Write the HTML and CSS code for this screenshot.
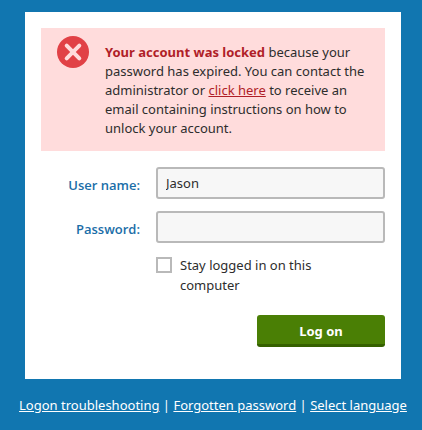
FILE: index.html
```html
<!DOCTYPE html>
<html lang="en">
<head>
<meta charset="utf-8">
<meta name="viewport" content="width=device-width, initial-scale=1">
<title>Log on</title>
<link rel="stylesheet" href="styles.css">
</head>
<body>
<main class="card">
  <div class="alert" role="alert">
    <svg class="alert-icon" viewBox="0 0 32 32" aria-hidden="true">
      <circle cx="16" cy="16" r="16" fill="#e14146"/>
      <path d="M9.7 9.7L22.3 22.3M22.3 9.7L9.7 22.3" stroke="#ffdcdc" stroke-width="4" stroke-linecap="round"/>
    </svg>
    <p class="alert-text"><strong>Your account was locked</strong> because your password has expired. You can contact the administrator or <a href="#">click here</a> to receive an email containing instructions on how to unlock your account.</p>
  </div>
  <form class="form">
    <label class="label" for="user">User name:</label>
    <input class="field" id="user" type="text" value="Jason">
    <label class="label" for="password">Password:</label>
    <input class="field" id="password" type="password">
    <div class="remember">
      <input class="check" id="stay" type="checkbox">
      <label for="stay">Stay logged in on this computer</label>
    </div>
    <button class="submit" type="submit">Log on</button>
  </form>
</main>
<nav class="links"><a href="#">Logon troubleshooting</a> | <a href="#">Forgotten password</a> | <a href="#">Select language</a></nav>
</body>
</html>
```
FILE: styles.css
```css
* {
  box-sizing: border-box;
}

body {
  margin: 0;
  padding: 12px 0;
  background: #1176b0;
  color: #2d2d2d;
  font: 13px/19px "Noto Sans", "Open Sans", sans-serif;
}

.card {
  margin: 0 21px 0 25px;
  padding: 16px 16px 32px;
  background: #fff;
}

.alert {
  display: flex;
  align-items: flex-start;
  gap: 16px;
  padding: 8px 16px 13px;
  background: #ffdcdc;
}

.alert-icon {
  flex: none;
  width: 32px;
  height: 32px;
}

.alert-text {
  margin: 7px 0 0;
}

.alert-text strong,
.alert-text a {
  color: #b01e28;
}

.form {
  display: grid;
  grid-template-columns: 99px 1fr;
  column-gap: 16px;
  row-gap: 12px;
  margin-top: 16px;
}

.label {
  padding-top: 9px;
  color: #1b6ea8;
  font-family: "Open Sans", "Noto Sans", sans-serif;
  font-weight: 600;
  text-align: right;
}

.field {
  width: 100%;
  height: 32px;
  padding: 0 8px;
  border: 2px solid #b9b9b9;
  border-radius: 3px;
  background: #f7f7f7;
  color: inherit;
  font: inherit;
}

.remember {
  grid-column: 2;
  display: flex;
  align-items: flex-start;
  gap: 8px;
  padding-right: 64px;
  line-height: 20px;
}

.check {
  flex: none;
  appearance: none;
  width: 16px;
  height: 16px;
  margin: 2px 0 0;
  border: 2px solid #b9b9b9;
  background: #fff;
}

.check:checked {
  background: #1176b0;
}

.submit {
  grid-column: 2;
  justify-self: end;
  width: 128px;
  height: 32px;
  margin-top: 8px;
  padding: 3px 0 0;
  border: 0;
  border-bottom: 3px solid #356000;
  border-radius: 3px;
  background: #4a7f05;
  color: #fff;
  font: inherit;
  font-weight: 700;
}

.links {
  margin-top: 17px;
  padding: 0 12px 0 16px;
  color: #fff;
  text-align: center;
}

.links a {
  color: inherit;
}
```
